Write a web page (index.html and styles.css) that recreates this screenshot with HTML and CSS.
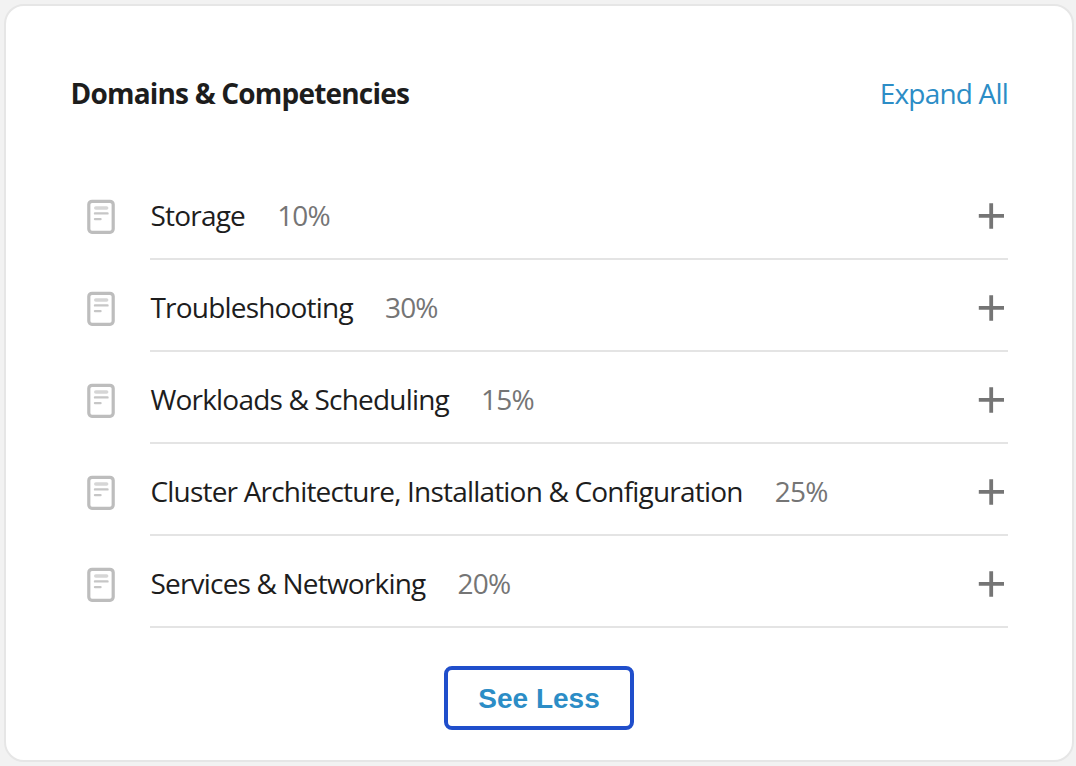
FILE: index.html
```html
<!DOCTYPE html>
<html lang="en">
<head>
<meta charset="utf-8">
<title>Domains &amp; Competencies</title>
<link rel="stylesheet" href="styles.css">
</head>
<body>
<svg width="0" height="0" class="sprite">
  <symbol id="doc" viewBox="0 0 30 36">
    <rect x="2.8" y="2.3" width="24.4" height="31" rx="3.2" fill="#fff" stroke="#bdbdbd" stroke-width="3.2"/>
    <path d="M9.8 9h10.8" fill="none" stroke="#d6d6d6" stroke-width="3.6" stroke-linecap="round"/>
    <path d="M9 14.4h12.5M9 20.1h5.5" fill="none" stroke="#c6c6c6" stroke-width="2.4" stroke-linecap="round"/>
  </symbol>
  <symbol id="plus" viewBox="0 0 26 26">
    <path d="M13.2 .2v25.6M.8 12.8h25.2" fill="none" stroke="#757575" stroke-width="3.8"/>
  </symbol>
</svg>
<main class="card">
  <header class="head">
    <h2 class="title">Domains &amp; Competencies</h2>
    <a class="expand">Expand All</a>
  </header>
  <ul class="list">
    <li class="item"><svg class="doc"><use href="#doc"/></svg><div class="row"><span class="name">Storage</span><span class="pct">10%</span><svg class="plus"><use href="#plus"/></svg></div></li>
    <li class="item"><svg class="doc"><use href="#doc"/></svg><div class="row"><span class="name">Troubleshooting</span><span class="pct">30%</span><svg class="plus"><use href="#plus"/></svg></div></li>
    <li class="item"><svg class="doc"><use href="#doc"/></svg><div class="row"><span class="name">Workloads &amp; Scheduling</span><span class="pct">15%</span><svg class="plus"><use href="#plus"/></svg></div></li>
    <li class="item"><svg class="doc"><use href="#doc"/></svg><div class="row"><span class="name">Cluster Architecture, Installation &amp; Configuration</span><span class="pct">25%</span><svg class="plus"><use href="#plus"/></svg></div></li>
    <li class="item"><svg class="doc"><use href="#doc"/></svg><div class="row"><span class="name">Services &amp; Networking</span><span class="pct">20%</span><svg class="plus"><use href="#plus"/></svg></div></li>
  </ul>
  <button class="less">See Less</button>
</main>
</body>
</html>
```
FILE: styles.css
```css
* { box-sizing: border-box; }
body {
  margin: 0;
  height: 766px;
  padding: 4px 2px 4px 4px;
  background: #f2f2f2;
  font-family: "Open Sans", sans-serif;
  font-size: 28px;
  letter-spacing: -0.81px;
  color: #1d1d1d;
  overflow: hidden;
}
.sprite { position: absolute; }
.card {
  height: 758px;
  padding: 67px 64px 0 64.5px;
  background: #fff;
  border: 2px solid #e6e6e6;
  border-radius: 20px;
}
.head {
  display: flex;
  justify-content: space-between;
  height: 40px;
  line-height: 40px;
}
.title { margin: 0; font-size: 28px; font-weight: 700; }
.expand { color: #2c8dc6; }
.list { margin: 55px 0 0; padding: 0; list-style: none; }
.item { display: flex; height: 92px; padding-left: 15.5px; }
.doc { width: 30px; height: 36px; margin: 31px 34px 0 0; filter: blur(0.5px); }
.row {
  flex: 1;
  display: flex;
  align-items: center;
  padding: 4px 4px 0 0.5px;
  border-bottom: 2px solid #e4e4e4;
}
.pct { margin-left: 32.2px; color: #757575; }
.plus { width: 26px; height: 26px; margin: 2px 0 0 auto; }
.less {
  display: block;
  width: 190px;
  height: 64px;
  margin: 38px 0 0 373.5px;
  padding: 2px 0 0;
  background: #fff;
  border: 4px solid #204ecb;
  border-radius: 8px;
  font: 700 28px "Liberation Sans", sans-serif;
  color: #2c8dc6;
}
```
